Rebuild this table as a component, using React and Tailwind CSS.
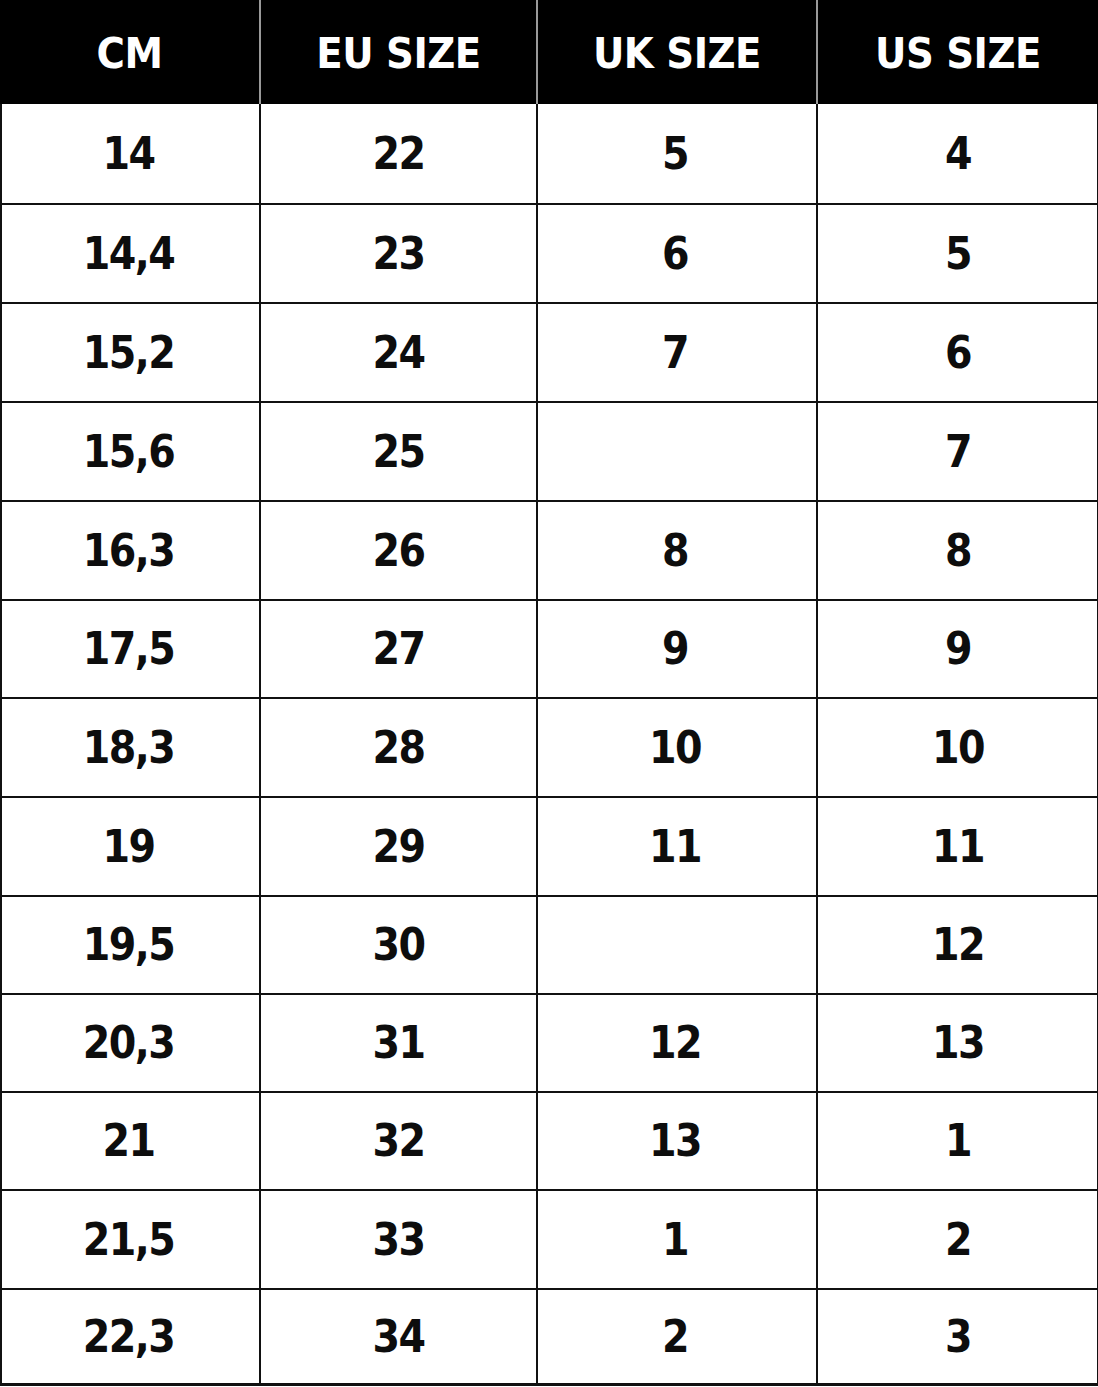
import React from "react";

const rows = [
  ["14", "22", "5", "4"],
  ["14,4", "23", "6", "5"],
  ["15,2", "24", "7", "6"],
  ["15,6", "25", "", "7"],
  ["16,3", "26", "8", "8"],
  ["17,5", "27", "9", "9"],
  ["18,3", "28", "10", "10"],
  ["19", "29", "11", "11"],
  ["19,5", "30", "", "12"],
  ["20,3", "31", "12", "13"],
  ["21", "32", "13", "1"],
  ["21,5", "33", "1", "2"],
  ["22,3", "34", "2", "3"],
];

const headers = ["CM", "EU SIZE", "UK SIZE", "US SIZE"];
const cellPad = ["pr-[4px]", "", "pr-[4px]", ""];

export default function App() {
  return (
    <div
      className="w-[1098px] h-[1387px] bg-white flex flex-col"
      style={{ fontFamily: '"DejaVu Sans Condensed", "DejaVu Sans", sans-serif', fontStretch: "condensed" }}
    >
      <div className="grid grid-cols-[261px_277px_280px_280px] h-[104px] shrink-0 bg-black">
        {headers.map((h, i) => (
          <div
            key={h}
            className={`flex items-center justify-center pt-[2px] text-white font-bold text-[43px] leading-none tracking-[-0.5px] ${i < 3 ? "border-r-2 border-[#9a9a9a]" : ""}`}
          >
            {h}
          </div>
        ))}
      </div>
      <div className="flex-1 grid grid-rows-[101px_99px_99px_99px_99px_98px_99px_99px_98px_98px_98px_99px_minmax(0,1fr)] border-l-2 border-b-[3px] border-r border-[#111] mb-[1px]">
        {rows.map((r, ri) => (
          <div
            key={ri}
            className={`grid grid-cols-[259px_277px_280px_280px] ${ri < rows.length - 1 ? "border-b-2 border-[#111]" : ""}`}
          >
            {r.map((c, ci) => (
              <div
                key={ci}
                className={`flex items-center justify-center text-[#0d0d0d] font-bold text-[44px] leading-none tracking-[-1.5px] ${cellPad[ci]} ${ci < 3 ? "border-r-2 border-[#111]" : ""}`}
              >
                {c}
              </div>
            ))}
          </div>
        ))}
      </div>
    </div>
  );
}
